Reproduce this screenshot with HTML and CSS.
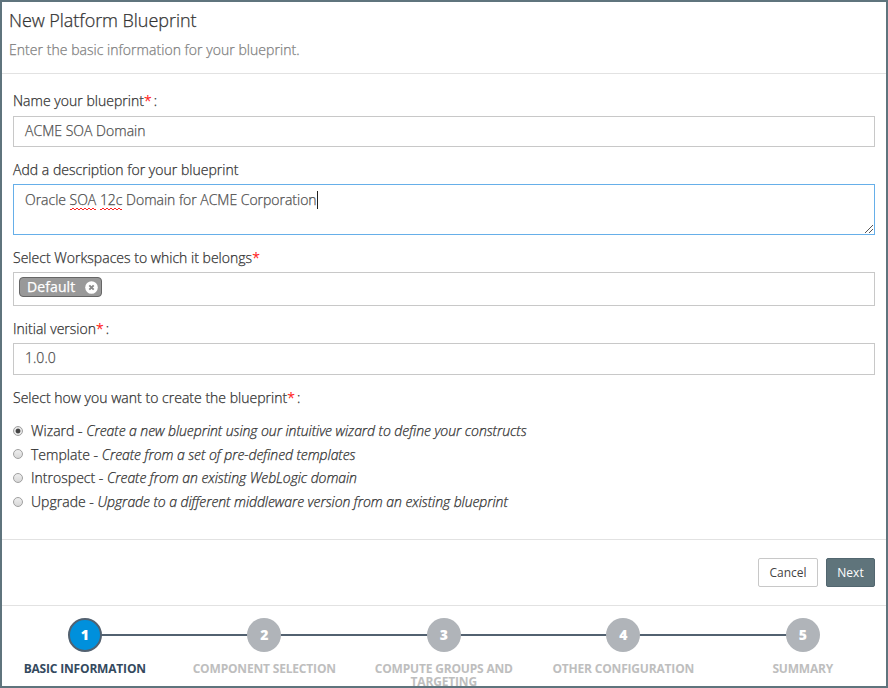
FILE: index.html
```html
<!DOCTYPE html>
<html lang="en">
<head>
<meta charset="utf-8">
<title>New Platform Blueprint</title>
<link rel="stylesheet" href="styles.css">
</head>
<body>
<main class="dialog">
  <header class="head">
    <h1 class="title">New Platform Blueprint</h1>
    <p class="subtitle">Enter the basic information for your blueprint.</p>
  </header>
  <section class="form">
    <div class="label label-name">Name your blueprint<span class="req">*</span><span class="colon">:</span></div>
    <div class="field field-name">ACME SOA Domain</div>
    <div class="label label-desc">Add a description for your blueprint</div>
    <div class="field field-desc"><span class="desc-text">Oracle <span class="misspelt">SOA</span> <span class="misspelt">12c</span> Domain for ACME Corporation</span><span class="caret"></span>
      <svg class="grip" width="8" height="8" viewBox="0 0 8 8" shape-rendering="crispEdges"><path d="M0 7h1v1H0zM1 6h1v1H1zM2 5h1v1H2zM3 4h1v1H3zM4 3h1v1H4zM5 2h1v1H5zM6 1h1v1H6zM7 0h1v1H7zM4 7h1v1H4zM5 6h1v1H5zM6 5h1v1H6zM7 4h1v1H7z" fill="#555"/></svg>
    </div>
    <div class="label label-space">Select Workspaces to which it belongs<span class="req">*</span></div>
    <div class="field field-space"><span class="tag"><span class="tag-text">Default</span><svg width="13" height="13" viewBox="0 0 13 13"><circle cx="6.5" cy="6.5" r="6.3" fill="#fff"/><path d="M4.3 4.3l4.4 4.4M8.7 4.3L4.3 8.7" stroke="#8a8a8a" stroke-width="1.9"/></svg></span></div>
    <div class="label label-version">Initial version<span class="req">*</span><span class="colon">:</span></div>
    <div class="field field-version">1.0.0</div>
    <div class="label label-how">Select how you want to create the blueprint<span class="req">*</span><span class="colon">:</span></div>
    <div class="options">
      <div class="option"><i class="radio on"></i><span>Wizard - <em>Create a new blueprint using our intuitive wizard to define your constructs</em></span></div>
      <div class="option"><i class="radio"></i><span>Template - <em>Create from a set of pre-defined templates</em></span></div>
      <div class="option"><i class="radio"></i><span>Introspect - <em>Create from an existing WebLogic domain</em></span></div>
      <div class="option"><i class="radio"></i><span>Upgrade - <em>Upgrade to a different middleware version from an existing blueprint</em></span></div>
    </div>
  </section>
  <footer class="actions">
    <button class="btn">Cancel</button>
    <button class="btn primary">Next</button>
  </footer>
  <nav class="steps">
    <div class="step active"><b class="dot">1</b><span class="step-name">BASIC INFORMATION</span></div>
    <div class="step"><b class="dot">2</b><span class="step-name">COMPONENT SELECTION</span></div>
    <div class="step"><b class="dot">3</b><span class="step-name">COMPUTE GROUPS AND TARGETING</span></div>
    <div class="step"><b class="dot">4</b><span class="step-name">OTHER CONFIGURATION</span></div>
    <div class="step"><b class="dot">5</b><span class="step-name">SUMMARY</span></div>
  </nav>
</main>
</body>
</html>
```
FILE: styles.css
```css
* { box-sizing: border-box; }
body { margin: 0; background: #fff; font-family: "Open Sans", sans-serif; font-size: 14px; font-weight: 300; letter-spacing: 0.02px; color: #333; }
.dialog { width: 888px; height: 688px; border: 2px solid #5f747d; overflow: hidden; display: flex; flex-direction: column; }
.head, .form { -webkit-text-stroke: 0.25px; }
.head { height: 72px; flex: none; border-bottom: 1px solid #e2e2e2; padding: 6px 7px 0; }
.title { margin: 0; font-size: 18px; font-weight: 300; line-height: 24px; letter-spacing: -0.05px; color: #333; }
.subtitle { margin: 8px 0 0; line-height: 20px; letter-spacing: 0.04px; color: #808080; }
.form { height: 465px; flex: none; padding: 17px 11px 0; }
.label { height: 20px; line-height: 20px; white-space: nowrap; }
.req { color: #f11; }
.colon { margin-left: 2px; }
.field { border: 1px solid #c8c8c8; padding: 0 11px; color: #505050; white-space: nowrap; }
.field-name { margin-top: 5px; height: 31px; line-height: 28px; }
.label-desc { margin-top: 13px; }
.field-desc { position: relative; margin-top: 4px; height: 51px; border-color: #66afe9; line-height: 30px; letter-spacing: -0.02px; display: flex; }
.misspelt {
  padding-bottom: 1px;
  background:
    repeating-linear-gradient(90deg, #f22 0 2px, transparent 2px 4px) 0 100% / 100% 1px no-repeat,
    repeating-linear-gradient(90deg, transparent 0 2px, #f22 2px 4px) 0 calc(100% - 1px) / 100% 1px no-repeat;
}
.caret { width: 1px; height: 18px; margin-top: 6px; background: #222; }
.grip { position: absolute; right: 1px; bottom: 1px; }
.label-space { margin-top: 13px; }
.field-space { margin-top: 4px; height: 34px; padding: 4px 5px; }
.tag { display: flex; align-items: center; justify-content: space-between; width: 83px; height: 20px; padding: 0 3px 0 7px; border: 1px solid #666; border-radius: 4px; background: #999; color: #fff; font-weight: 400; line-height: 18px; letter-spacing: 0.1px; }
.label-version { margin-top: 13px; }
.field-version { margin-top: 4px; height: 32px; line-height: 28px; }
.label-how { margin-top: 13px; }
.options { margin-top: 11px; }
.option { display: flex; align-items: center; height: 23.6px; line-height: 23.6px; white-space: nowrap; }
.option em { letter-spacing: -0.07px; }
.radio { width: 10px; height: 10px; margin-right: 8px; border: 1px solid #a0a0a0; border-radius: 50%; background: linear-gradient(#eee, #d8d8d8); }
.radio.on { background: radial-gradient(circle, #444 0 2px, #e6e6e6 2.8px); }
.actions { height: 67px; flex: none; border-top: 1px solid #e2e2e2; border-bottom: 1px solid #e2e2e2; padding: 18px 11px 0; display: flex; justify-content: flex-end; gap: 8px; }
.btn { width: 60px; height: 29px; padding: 0; border: 1px solid #c8c8c8; border-radius: 2px; background: #fff; color: #444; font: 12px "Open Sans", sans-serif; }
.btn.primary { width: 49px; border-color: #52666f; background: #5f747b; color: #fff; font-weight: 500; }
.steps { width: 898px; flex: none; margin-left: -7px; padding-top: 12px; display: grid; grid-template-columns: repeat(5, 179.5px); }
.step { position: relative; display: flex; flex-direction: column; align-items: center; color: #bebebe; }
.step + .step::before { content: ""; position: absolute; left: -90px; top: 16px; width: 180px; height: 2px; background: #526170; }
.dot { position: relative; z-index: 1; width: 34px; height: 34px; border-radius: 50%; background: #b0b4b9; color: #fff; font-size: 14px; font-weight: 800; line-height: 34px; text-align: center; }
.active .dot { z-index: 2; border: 2px solid #526170; background: #0090dc; line-height: 30px; }
.step-name { width: 160px; margin-top: 10px; font-size: 12px; font-weight: 700; line-height: 13px; letter-spacing: -0.18px; text-align: center; }
.active .step-name { color: #34495e; }
```
